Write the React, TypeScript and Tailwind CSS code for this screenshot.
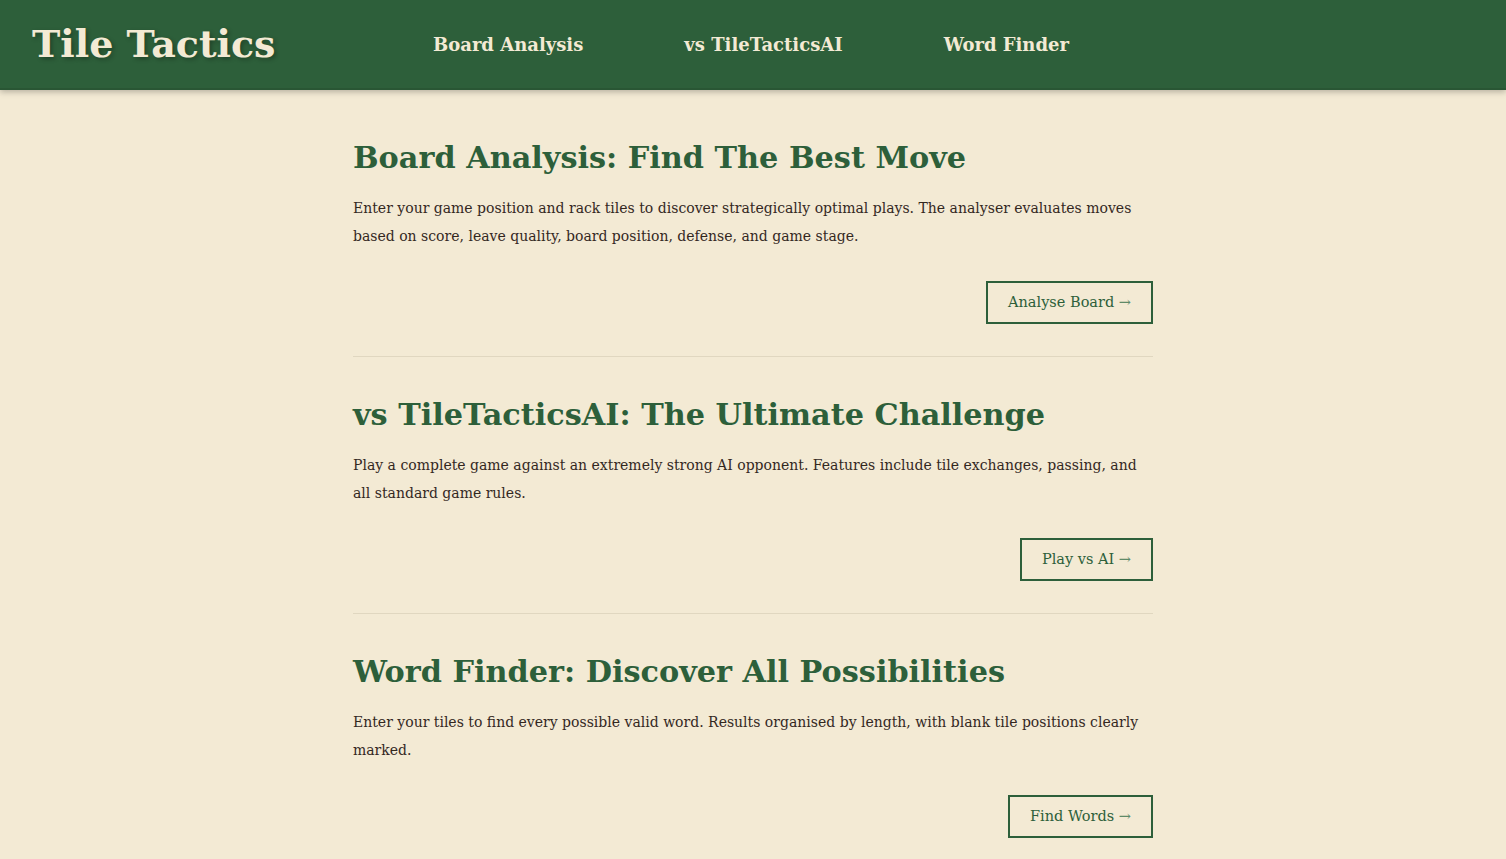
import React from "react";

const sections = [
  {
    title: "Board Analysis: Find The Best Move",
    text: "Enter your game position and rack tiles to discover strategically optimal plays. The analyser evaluates moves based on score, leave quality, board position, defense, and game stage.",
    button: "Analyse Board",
  },
  {
    title: "vs TileTacticsAI: The Ultimate Challenge",
    text: "Play a complete game against an extremely strong AI opponent. Features include tile exchanges, passing, and all standard game rules.",
    button: "Play vs AI",
  },
  {
    title: "Word Finder: Discover All Possibilities",
    text: "Enter your tiles to find every possible valid word. Results organised by length, with blank tile positions clearly marked.",
    button: "Find Words",
  },
];

export default function App() {
  return (
    <div className="min-h-[859px] bg-[#1c1c1c]">
      <div
        className="min-h-[859px] bg-[#f3ead4] rounded-bl-[10px] overflow-hidden"
        style={{ fontFamily: '"DejaVu Serif", Georgia, serif' }}
      >
        <header className="h-[90px] bg-[#2d5f3a] border-b-2 border-[#295634] flex items-center shadow-[0_2px_6px_rgba(0,0,0,0.25)] relative z-10">
          <div className="pl-[32px] w-[433px] shrink-0">
            <h1 className="text-[38px] font-bold text-[#f3ead4] leading-none [text-shadow:2px_2px_4px_rgba(0,0,0,0.3)]">
              Tile Tactics
            </h1>
          </div>
          <nav className="flex gap-[101px] text-[18px] font-bold text-[#f3ead4] pt-[1px]">
            <span>Board Analysis</span>
            <span>vs TileTacticsAI</span>
            <span>Word Finder</span>
          </nav>
        </header>
        <main className="w-[800px] mx-auto pt-[44px]">
          {sections.map((s, i) => (
            <section
              key={i}
              className={`pb-[32px] ${i < sections.length - 1 ? "border-b border-[#e0d7c0] mb-[34px]" : ""}`}
            >
              <h2 className="text-[30.3px] font-bold text-[#2d5f3a] leading-[48px]">{s.title}</h2>
              <p className="mt-[12px] text-[14px] leading-[28px] text-[#33281f]">{s.text}</p>
              <div className="flex justify-end mt-[31px]">
                <button className="h-[43px] px-[20px] border-2 border-[#2d5f3a] text-[#2d5f3a] text-[14.5px] flex items-center">
                  {s.button}&nbsp;<span className="text-[#5f8a68]">→</span>
                </button>
              </div>
            </section>
          ))}
        </main>
      </div>
    </div>
  );
}
